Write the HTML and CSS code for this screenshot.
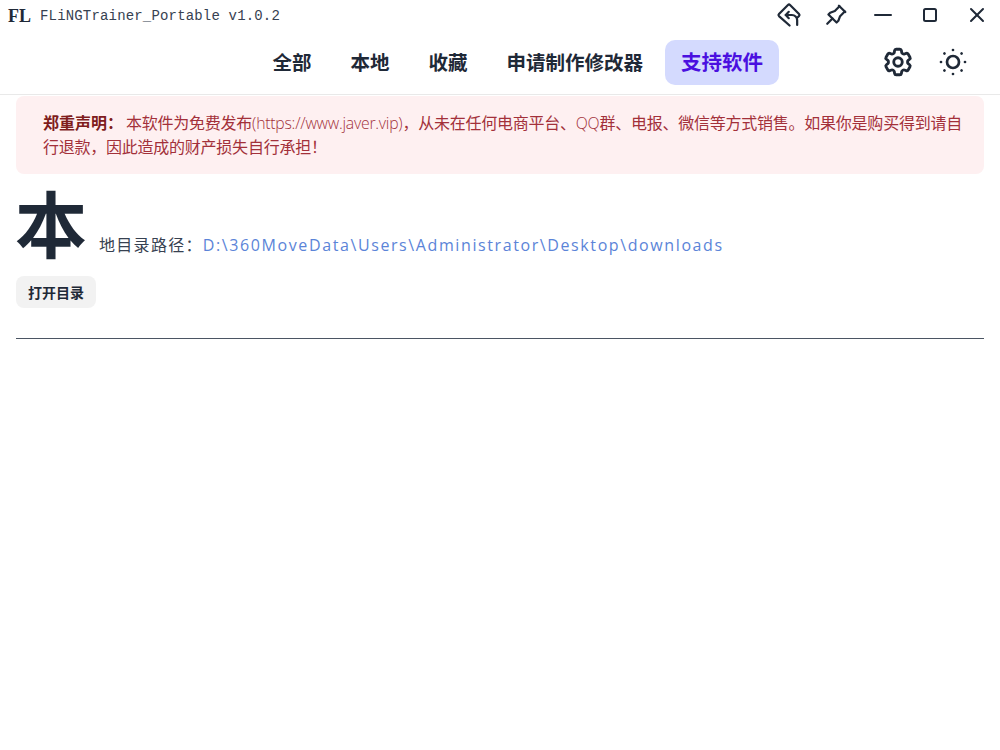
FILE: index.html
```html
<!DOCTYPE html>
<html lang="zh-CN">
<head>
<meta charset="utf-8">
<title>FLiNGTrainer_Portable</title>
<link rel="stylesheet" href="styles.css">
</head>
<body>
<header class="titlebar">
  <div class="brand"><span class="logo">FL</span><span class="app-name">FLiNGTrainer_Portable v1.0.2</span></div>
  <div class="win-controls">
    <button class="win-btn"><svg class="ico-win ico-lg" viewBox="0 0 24 24"><path d="M12.500 21 L3.400 12.900 a1.300 1.300 0 0 1 0 -1.800 L11.100 3.400 a1.300 1.300 0 0 1 1.800 0 L20.600 11.100 a1.300 1.300 0 0 1 0 1.800 L19.500 14"/><path d="M11.800 9.300 L9.200 12 L11.800 14.700"/><path d="M9.200 12 H14.500 a4.500 4.500 0 0 1 4.500 4.500 V20.500"/></svg></button>
    <button class="win-btn"><svg class="ico-win ico-lg" viewBox="0 0 24 24"><path d="M15 4.500l-4 4l-4 1.500l-1.500 1.500l7 7l1.500 -1.500l1.500 -4l4 -4"/><path d="M9 15l-4.500 4.500"/><path d="M14.500 4l5.500 5.500"/></svg></button>
    <button class="win-btn"><svg class="ico-win" viewBox="0 0 24 24"><path d="M4 12h16"/></svg></button>
    <button class="win-btn"><svg class="ico-win" viewBox="0 0 24 24"><rect x="6" y="6" width="12" height="12" rx="1.500"/></svg></button>
    <button class="win-btn"><svg class="ico-win" viewBox="0 0 24 24"><path d="M6 6l12 12"/><path d="M18 6l-12 12"/></svg></button>
  </div>
</header>
<nav class="navbar">
  <ul class="menu">
    <li class="menu-item">全部</li>
    <li class="menu-item">本地</li>
    <li class="menu-item">收藏</li>
    <li class="menu-item">申请制作修改器</li>
    <li class="menu-item active">支持软件</li>
  </ul>
  <div class="actions">
    <button class="act-btn"><svg class="ico-gear" viewBox="0 0 24 24"><path d="M9.594 3.940c.09-.542.56-.94 1.110-.94h2.593c.55 0 1.020.398 1.110.94l.213 1.281c.063.374.313.686.645.870.074.040.147.083.220.127.325.196.72.257 1.075.124l1.217-.456a1.125 1.125 0 0 1 1.370.490l1.296 2.247a1.125 1.125 0 0 1-.260 1.431l-1.003.827c-.293.241-.438.613-.43.992a7.723 7.723 0 0 1 0 .255c-.008.378.137.75.43.991l1.004.827c.424.35.534.955.26 1.430l-1.298 2.247a1.125 1.125 0 0 1-1.369.491l-1.217-.456c-.355-.133-.75-.072-1.076.124a6.470 6.470 0 0 1-.22.128c-.331.183-.581.495-.644.869l-.213 1.281c-.09.543-.56.94-1.110.94h-2.594c-.55 0-1.019-.398-1.110-.94l-.213-1.281c-.062-.374-.312-.686-.644-.87a6.520 6.520 0 0 1-.22-.127c-.325-.196-.72-.257-1.076-.124l-1.217.456a1.125 1.125 0 0 1-1.369-.49l-1.297-2.247a1.125 1.125 0 0 1 .26-1.431l1.004-.827c.292-.24.437-.613.43-.991a6.932 6.932 0 0 1 0-.255c.007-.38-.138-.751-.43-.992l-1.004-.827a1.125 1.125 0 0 1-.26-1.430l1.297-2.247a1.125 1.125 0 0 1 1.370-.491l1.216.456c.356.133.751.072 1.076-.124.072-.044.146-.086.22-.128.332-.183.582-.495.644-.869l.214-1.280Z"/><circle cx="12" cy="12" r="3"/></svg></button>
    <button class="act-btn"><svg class="ico-sun" viewBox="0 0 24 24"><circle cx="12" cy="12" r="4"/><path d="M4 12h.01M12 4v.01M20 12h.01M12 20v.01M6.310 6.310l-.01 -.01M17.710 6.310l.01 -.01M17.700 17.700l.01 .01M6.300 17.700l-.01 .01"/></svg></button>
  </div>
</nav>
<main class="content">
  <div class="alert"><strong class="alert-title">郑重声明：</strong><span class="alert-text">本软件为免费发布<span class="latin">(https://www.javer.vip)</span>，从未在任何电商平台、<span class="latin">QQ</span>群、电报、微信等方式销售。如果你是购买得到请自行退款，因此造成的财产损失自行承担！</span></div>
  <div class="path-row"><span class="big-char">本</span><span class="path-text"><span class="path-label">地目录路径：</span><a class="path-link">D:\360MoveData\Users\Administrator\Desktop\downloads</a></span></div>
  <button class="open-btn">打开目录</button>
  <hr class="divider">
</main>
</body>
</html>
```
FILE: styles.css
```css
* { box-sizing: border-box; }
html, body { margin: 0; padding: 0; background: #fff; }
body { font-family: "Open Sans", "Noto Sans CJK SC", sans-serif; color: #1f2937; width: 1000px; height: 750px; overflow: hidden; }
button { font: inherit; border: 0; background: none; padding: 0; color: inherit; }

.titlebar { height: 30px; display: flex; align-items: center; justify-content: space-between; padding-left: 8px; background: #fff; }
.brand { display: flex; align-items: center; gap: 9px; padding-top: 2px; }
.logo { font-family: "Liberation Serif", serif; font-weight: 700; font-size: 18px; color: #1f2937; }
.app-name { font-family: "Liberation Mono", monospace; font-size: 14px; letter-spacing: 0.17px; color: #374151; }
.win-controls { display: flex; align-items: center; gap: 15px; padding-right: 7px; }
.win-btn { width: 32px; height: 30px; display: flex; align-items: center; justify-content: center; }
.ico-win { width: 24px; height: 24px; fill: none; stroke: #1f2937; stroke-width: 2; stroke-linecap: round; stroke-linejoin: round; flex: none; }
.ico-lg { width: 28px; height: 28px; stroke-width: 1.900; }

.navbar { height: 65px; display: flex; align-items: center; justify-content: flex-end; border-bottom: 1px solid #e9e9e9; padding-right: 23px; gap: 95px; }
.menu { list-style: none; margin: 0; padding: 0; display: flex; align-items: center; gap: 7px; }
.menu-item { font-family: "Noto Sans CJK SC", sans-serif; font-weight: 700; font-size: 19.500px; line-height: 43px; height: 45px; padding: 0 16px; border-radius: 10px; color: #1f2937; }
.menu-item.active { background: #d4dafe; color: #4a10e0; font-size: 20.500px; margin-left: -1px; }
.actions { display: flex; align-items: center; gap: 7px; }
.act-btn { width: 48px; height: 48px; display: flex; align-items: center; justify-content: center; }
.ico-gear { width: 34px; height: 34px; fill: none; stroke: #1f2937; stroke-width: 2; stroke-linecap: round; stroke-linejoin: round; flex: none; }
.ico-sun { width: 36px; height: 36px; fill: none; stroke: #1f2937; stroke-width: 1.800; stroke-linecap: round; stroke-linejoin: round; flex: none; }

.content { padding: 1px 16px 0; }
.alert { background: #fef0f1; border-radius: 8px; padding: 15px 16px 15px 27px; font-size: 16px; line-height: 24px; height: 78px; color: #a3303a; }
.alert-title { color: #7f1d1d; font-weight: 700; margin-right: 3px; }
.alert-text { font-weight: 400; letter-spacing: -0.240px; }
.latin { font-weight: 300; font-size: 15.800px; line-height: 0; }

.path-row { display: flex; align-items: baseline; height: 102px; }
.big-char { font-family: "Noto Sans CJK SC", sans-serif; font-size: 72px; font-weight: 700; line-height: 94px; color: #1f2937; margin-right: 12px; margin-left: -1px; }
.path-label { font-family: "Noto Sans CJK SC", sans-serif; font-size: 16px; letter-spacing: 1.300px; color: #374151; vertical-align: 1px; }
.path-link { font-family: "Open Sans", "Noto Sans CJK SC", sans-serif; font-size: 16px; letter-spacing: 1.600px; color: #5b84d8; vertical-align: 1px; }

.open-btn { display: block; width: 80px; height: 32px; background: #f2f2f2; border-radius: 8px; font-family: "Noto Sans CJK SC", sans-serif; font-size: 14px; font-weight: 700; color: #1f2937; }
.divider { border: 0; border-top: 1px solid #4b5563; margin: 30px 0 0; }
```
